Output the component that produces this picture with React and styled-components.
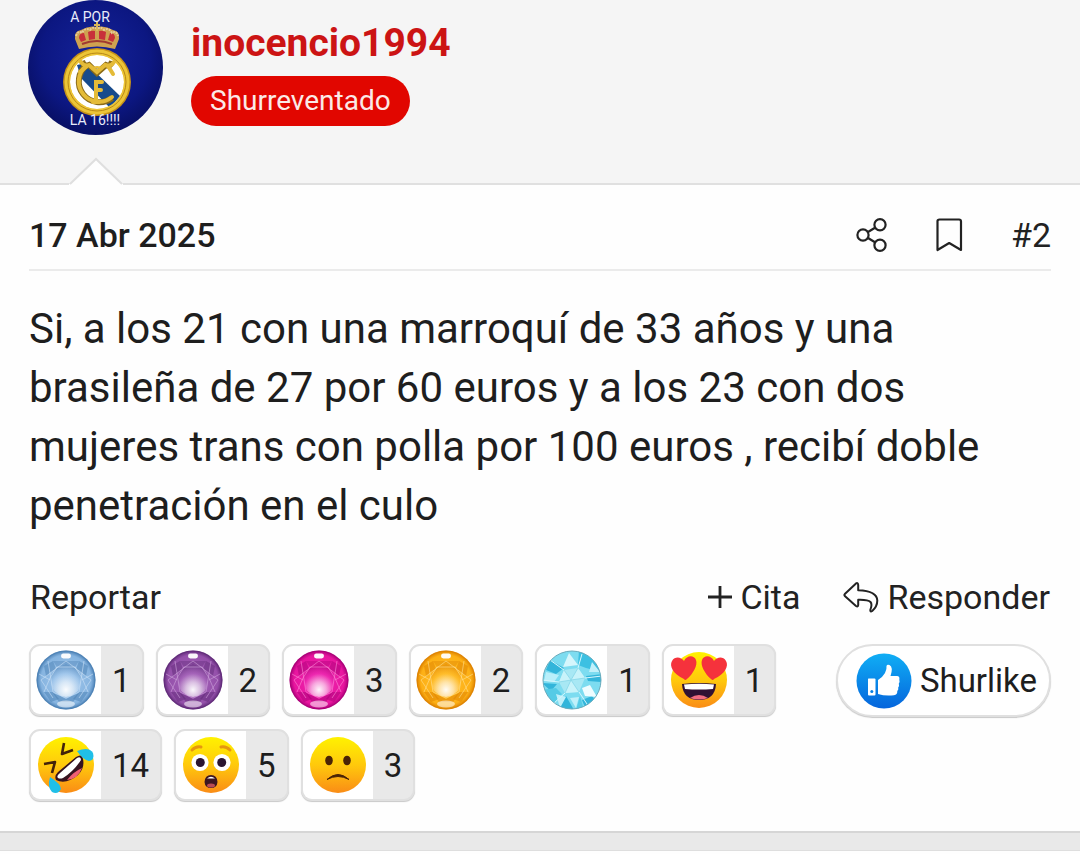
import React from 'react';
import styled, { createGlobalStyle } from 'styled-components';

const GEM_COLORS = {
  blue: { light: '#a4c9ed', mid: '#86b4e0', dark: '#4a7fb4', line: '#cde2f6' },
  purple: { light: '#a766bb', mid: '#9450aa', dark: '#5f2a78', line: '#cfa5dc' },
  pink: { light: '#ee2ab2', mid: '#e8159f', dark: '#a90077', line: '#fb8ad6' },
  amber: { light: '#ffbe2c', mid: '#fdb015', dark: '#dd8100', line: '#ffe095' },
};

const AvatarArt = () => (
  <svg viewBox="0 0 135 135" width="100%" height="100%" role="img" aria-label="Avatar de inocencio1994">
    <defs>
      <radialGradient id="avatarBg" cx="50%" cy="42%" r="58%">
        <stop offset="0" stopColor="#15239a" />
        <stop offset="0.7" stopColor="#0c1782" />
        <stop offset="1" stopColor="#080f63" />
      </radialGradient>
      <clipPath id="crestInner">
        <circle cx="69" cy="82" r="27" />
      </clipPath>
    </defs>
    <circle cx="67.5" cy="67.5" r="67.5" fill="url(#avatarBg)" />
    {/* crown */}
    <path d="M51 49 L47 39 Q46 31 53 30 Q61 25 69 27 Q77 25 85 30 Q92 31 91 39 L87 49 Q69 44 51 49Z" fill="#cfa250" />
    <path d="M51 38 Q51 33 56 33 L58 40 L53 42Z M87 38 Q87 33 82 33 L80 40 L85 42Z" fill="#c8303a" />
    <path d="M60 32 Q64 30 67 31 V39 L61 40Z M78 32 Q74 30 71 31 V39 L77 40Z" fill="#c8303a" />
    <path d="M54 44 Q69 38 84 44" stroke="#a03a30" strokeWidth="2" fill="none" />
    <path d="M48 36 Q50 30 54 33 Q57 27 62 30 Q65 26 69 29 Q73 26 76 30 Q81 27 84 33 Q88 30 90 36" stroke="#e6cb98" strokeWidth="2" strokeDasharray="2 1" fill="none" />
    <path d="M69 22 V31 M66 25 H72" stroke="#d9b75a" strokeWidth="2" />
    {/* round crest with the monogram */}
    <circle cx="69" cy="82" r="34" fill="#c69218" />
    <circle cx="69" cy="82" r="32.5" fill="#ecc537" />
    <circle cx="69" cy="82" r="29" fill="none" stroke="#b98a16" strokeWidth="1" />
    <g clipPath="url(#crestInner)">
      <circle cx="69" cy="82" r="27" fill="#fff" />
      <path d="M49 65 L58 63 L92 96 L82 108 L53 78Z" fill="#174b8c" />
    </g>
    <g fill="none" stroke="#8b6b18" strokeWidth="6">
      <path d="M84 98 A20 20 0 1 1 59 65" />
      <path d="M54 61 Q56 67 61 65 L69 73 L78 65 Q83 67 84 61" />
    </g>
    <g fill="none" stroke="#e4bb38" strokeWidth="4" strokeLinecap="round">
      <path d="M84 97 A20 20 0 1 1 58 66" />
      <path d="M52 61 Q56 67 61 65 L69 72 L77 65 Q83 67 86 62 M59 66 L52 72 M80 66 L85 74" />
      <path d="M68 101 V82 H74 M68 90 H73 M65 102 H71" />
    </g>
    <path d="M63 69 Q69 65 75 69" stroke="#e4bb38" strokeWidth="2" fill="none" />
    <AvatarText x="62" y="22">A POR</AvatarText>
    <AvatarText x="67" y="125">LA 16!!!!</AvatarText>
  </svg>
);

const ShareIcon = () => (
  <svg width="32" height="36" viewBox="0 0 32 36" fill="none" stroke="#222" strokeWidth="2.2" aria-hidden="true">
    <circle cx="8" cy="18" r="5.6" />
    <circle cx="25" cy="7.7" r="5.6" />
    <circle cx="25" cy="28.3" r="5.6" />
    <path d="M13 15 L20 10.8 M13 21 L20 25.2" />
  </svg>
);

const BookmarkIcon = () => (
  <svg width="28" height="36" viewBox="0 0 28 36" fill="none" stroke="#222" strokeWidth="2.2" strokeLinejoin="round" aria-hidden="true">
    <path d="M2.5 33 V4 Q2.5 2.5 4.5 2.5 H24 Q26 2.5 26 4.5 V33 L14.2 26Z" />
  </svg>
);

const PlusIcon = () => (
  <svg width="24" height="24" viewBox="0 0 24 24" stroke="#222" strokeWidth="2.8" aria-hidden="true">
    <path d="M12 1 V23 M0 12 H24" />
  </svg>
);

const ReplyIcon = () => (
  <svg width="36" height="32" viewBox="0 0 36 32" fill="none" stroke="#222" strokeWidth="2" strokeLinejoin="round" aria-hidden="true">
    <path d="M1.8 13 Q1 14 1.8 15 L13 25 Q15 26.2 15.2 24 V18.8 Q25 18.5 27.5 21 Q29.5 23.2 27.3 29 Q27.2 31.3 29.2 30 Q34.3 25.5 34.3 19.5 Q34 9.8 15.2 9.2 V4 Q15 1.2 13 2.4Z" />
  </svg>
);

const LikeIcon = () => (
  <svg width="56" height="56" viewBox="0 0 56 56" aria-hidden="true">
    <defs>
      <linearGradient id="likeBg" x1="0" y1="0" x2="0" y2="1">
        <stop offset="0" stopColor="#10aef5" />
        <stop offset="1" stopColor="#0565dc" />
      </linearGradient>
    </defs>
    <circle cx="28" cy="28" r="27.5" fill="url(#likeBg)" />
    <path d="M12.5 25.5 H18.5 Q19.5 25.5 19.5 26.5 V41.5 Q19.5 42.5 18.5 42.5 H13 Q12 42.5 12 41.5 V26.5Q12 25.5 12.5 25.5Z" fill="#fff" />
    <circle cx="15.8" cy="38.5" r="1.5" fill="#0880e4" />
    <path d="M22 27 Q26 25 29 20 Q31 16 30.5 13 Q31 11 33.5 12 Q37.5 14 34.5 23 H41 Q44 23.3 43.3 26.5 Q44 28.5 42.8 30.5 Q43.5 32.7 42.2 34.5 Q42.8 36.7 41.3 38 Q41.5 42 38 42.2 Q29 43.2 22 41Z" fill="#fff" />
  </svg>
);

const Gem = ({ tone }) => {
  const c = GEM_COLORS[tone];
  return (
    <svg width="60" height="60" viewBox="0 0 60 60" aria-hidden="true">
      <defs>
        <radialGradient id={`gem-${tone}`} cx="50%" cy="50%" r="50%">
          <stop offset="0" stopColor={c.light} />
          <stop offset="0.85" stopColor={c.mid} />
          <stop offset="1" stopColor={c.dark} />
        </radialGradient>
        <radialGradient id={`core-${tone}`} cx="50%" cy="78%" r="75%">
          <stop offset="0" stopColor="#fff" stopOpacity="0.95" />
          <stop offset="0.3" stopColor="#fff" stopOpacity="0.6" />
          <stop offset="0.65" stopColor={c.light} stopOpacity="0.6" />
          <stop offset="1" stopColor={c.dark} stopOpacity="0.6" />
        </radialGradient>
      </defs>
      <circle cx="30" cy="30" r="29.5" fill={`url(#gem-${tone})`} />
      <path d="M8 16 L17 11 L20 19 L10 26Z M52 16 L43 11 L40 19 L50 26Z M8 42 L17 42 L23 49 L15 52Z M52 42 L43 42 L37 49 L45 52Z" fill={c.dark} opacity="0.5" />
      <path d="M17 11 H43 L39 17 L30 14 L21 17Z" fill={c.dark} opacity="0.4" />
      <path d="M17 43 L24 46 L30 49 L36 46 L43 43 L37 52 H23Z" fill={c.dark} opacity="0.5" />
      <path d="M22 17 L30 14 L38 17 L45 25 L46 32 L42 41 L35 46 L30 47 L25 46 L18 41 L14 32 L15 25Z" fill={`url(#core-${tone})`} />
      <path d="M30 11 L5 30 L17 48 M30 11 L55 30 L43 48 M12 11 L17 42 L30 48 L43 42 L48 11 M8 42 L14 28 L21 17 H39 L46 28 L52 42 M3 24 L14 30 M57 24 L46 30" fill="none" stroke={c.line} strokeWidth="0.9" opacity="0.65" />
      <ellipse cx="30" cy="54" rx="9" ry="3.4" fill="#fff" opacity="0.55" />
      <rect x="25" y="3.5" width="10" height="5" rx="2.4" fill="#fff" opacity="0.95" />
      <circle cx="30" cy="30" r="28.9" fill="none" stroke={c.dark} strokeWidth="1.2" opacity="0.5" />
    </svg>
  );
};

const Diamond = () => (
  <svg width="60" height="60" viewBox="0 0 60 60" aria-hidden="true">
    <defs>
      <clipPath id="diamondClip">
        <circle cx="30" cy="30" r="29" />
      </clipPath>
    </defs>
    <g clipPath="url(#diamondClip)">
      <rect width="60" height="60" fill="#7ddcf0" />
      <path d="M37 0 L36 15 L44 18 L60 22 L52 4Z" fill="#3cc0e2" />
      <path d="M8 10 L22 18 L14 24 L4 20Z M0 33 L15 34 L9 41Z M24 46 L32 60 H14Z M44 26 L60 24 V32 L46 31Z M40 50 L50 46 L56 54 L44 60Z" fill="#33b5da" />
      <path d="M0 40 L14 38 L20 44 L11 54Z M38 46 L42 60 H34Z" fill="#55cbe6" />
      <path d="M27 3 L36 15 L21 17Z" fill="#d5f6fc" />
      <path d="M4 22 L17 25 L12 32 L2 31Z" fill="#b9effa" />
      <path d="M40 38 L48 35 L55 47 L43 46Z" fill="#eefcff" />
      <path d="M14 44 L24 47 L18 58Z M50 12 L58 22 L47 22Z M28 48 L37 47 L34 58Z" fill="#c0f0fa" />
      <path d="M22 20 L36 18 L43 28 L37 42 L23 43 L17 32Z" fill="#a8e8f4" />
      <path d="M22 20 L29 30 L17 32Z M36 18 L29 30 L43 28Z M37 42 L29 30 L23 43Z" fill="#c8f3fa" />
      <path d="M29 30 L22 20 M29 30 L36 18 M29 30 L43 28 M29 30 L37 42 M29 30 L23 43 M29 30 L17 32" stroke="#86d7e8" strokeWidth="0.8" />
      <path d="M22 20 L8 10 M36 18 L40 4 M43 28 L60 26 M37 42 L47 57 M23 43 L11 54 M17 32 L0 30" stroke="#d5f7fd" strokeWidth="1" />
    </g>
    <circle cx="30" cy="30" r="29" fill="none" stroke="#6aaabb" strokeWidth="1" />
  </svg>
);

const Face = ({ id, children }) => (
  <svg width="60" height="60" viewBox="0 0 60 60" aria-hidden="true">
    <defs>
      <linearGradient id={id} x1="0.5" y1="0" x2="0.5" y2="1">
        <stop offset="0" stopColor="#fff200" />
        <stop offset="0.5" stopColor="#ffc90c" />
        <stop offset="1" stopColor="#fa8c16" />
      </linearGradient>
    </defs>
    <circle cx="30" cy="30" r="28" fill={`url(#${id})`} />
    {children}
  </svg>
);

const LoveFace = () => (
  <Face id="loveFace">
    <path d="M15 29 C4 24 0 16 3 11 C6 6 12 7 15 11 C18 5 25 5 27 10 C29 15 24 24 18 29 Q16 31 15 29Z" fill="#f5323c" />
    <path d="M45 29 C56 24 60 16 57 11 C54 6 48 7 45 11 C42 5 35 5 33 10 C31 15 36 24 42 29 Q44 31 45 29Z" fill="#f5323c" />
    <path d="M13 34 Q30 32 47 34 Q46 50 30 50 Q14 50 13 34Z" fill="#301133" />
    <path d="M15 34.5 Q30 33 45 34.5 L44 39 Q30 40 16 39Z" fill="#fff" />
    <path d="M21 48 Q30 42 39 48 Q30 51 21 48Z" fill="#f16c80" />
  </Face>
);

const LaughFace = () => (
  <Face id="laughFace">
    <path d="M28 8 L26 19 L37 15 M8 29 L19 27 L16 38" fill="none" stroke="#43230a" strokeWidth="2.6" strokeLinejoin="round" />
    <path d="M20 45 Q18 41 22 37 L40 22 Q46 18 47 24 Q49 33 42 40 Q30 50 20 45Z" fill="#361320" />
    <path d="M22 43 Q20 41 24 38 L41 23 Q45 21 45 25 Q38 36 27 43 Q24 44 22 43Z" fill="#fff" />
    <path d="M31 45 Q37 37 46 33 Q42 44 31 45Z" fill="#ef6074" />
    <path d="M41 16 Q53 11 57 18 Q59 25 53 26 Q47 25 41 16Z" fill="#20bfe8" />
    <path d="M14 42 Q25 49 25 54 Q22 60 16 57 Q11 52 14 42Z" fill="#20bfe8" />
  </Face>
);

const ShockFace = () => (
  <Face id="shockFace">
    <path d="M11 15 Q15 11 20 12 M40 12 Q45 11 49 15" fill="none" stroke="#e5960f" strokeWidth="3" strokeLinecap="round" />
    <circle cx="19" cy="27.5" r="8.6" fill="#fff" />
    <circle cx="41" cy="27.5" r="8.6" fill="#fff" />
    <circle cx="19.3" cy="27.5" r="4.5" fill="#2a1530" />
    <circle cx="40.7" cy="27.5" r="4.5" fill="#2a1530" />
    <path d="M23.5 47 Q24 40 30 40 Q36 40 36.5 47 Q36 53 30 53 Q24 53 23.5 47Z" fill="#3c1622" />
    <path d="M26 43.5 Q30 40 34 43.5Z" fill="#fff" />
    <ellipse cx="30" cy="50.5" rx="4" ry="2" fill="#b84b55" />
  </Face>
);

const SadFace = () => (
  <Face id="sadFace">
    <ellipse cx="21" cy="25.5" rx="3.8" ry="4.8" fill="#4a2306" />
    <ellipse cx="39" cy="25.5" rx="3.8" ry="4.8" fill="#4a2306" />
    <path d="M19 44.5 Q30 34.5 41 44.5 Q30 38.5 19 44.5Z" fill="#4a2306" stroke="#4a2306" strokeWidth="1" strokeLinejoin="round" />
  </Face>
);

const reactions = [
  { name: 'Gema azul', icon: <Gem tone="blue" />, count: 1 },
  { name: 'Gema morada', icon: <Gem tone="purple" />, count: 2 },
  { name: 'Gema rosa', icon: <Gem tone="pink" />, count: 3 },
  { name: 'Gema dorada', icon: <Gem tone="amber" />, count: 2 },
  { name: 'Diamante', icon: <Diamond />, count: 1 },
  { name: 'Me encanta', icon: <LoveFace />, count: 1 },
  { name: 'Risa', icon: <LaughFace />, count: 14 },
  { name: 'Asombro', icon: <ShockFace />, count: 5 },
  { name: 'Triste', icon: <SadFace />, count: 3 },
];

const App = () => (
  <>
    <GlobalStyle />
    <Post>
      <UserHeader>
        <Avatar href="#perfil">
          <AvatarArt />
        </Avatar>
        <UserInfo>
          <UserName href="#perfil">inocencio1994</UserName>
          <UserBadge>Shurreventado</UserBadge>
        </UserInfo>
        <Notch viewBox="0 0 54 28" aria-hidden="true">
          <path d="M0 28 V27 L27 2 L54 27 V28Z" fill="#fefefe" />
          <path d="M1 27 L27 2 L53 27" fill="none" stroke="#dfdfdf" strokeWidth="2" />
        </Notch>
      </UserHeader>
      <PostBody>
        <MetaRow>
          <PostDate>17 Abr 2025</PostDate>
          <MetaActions>
            <IconButton type="button" aria-label="Compartir">
              <ShareIcon />
            </IconButton>
            <IconButton type="button" aria-label="Guardar">
              <BookmarkIcon />
            </IconButton>
            <TextLink href="#post-2">#2</TextLink>
          </MetaActions>
        </MetaRow>
        <Message>
          Si, a los 21 con una marroquí de 33 años y una brasileña de 27 por 60 euros y a los 23 con dos
          mujeres trans con polla por 100 euros , recibí doble penetración en el culo
        </Message>
        <ActionRow>
          <TextLink href="#reportar">Reportar</TextLink>
          <ActionGroup>
            <TextLink href="#citar">
              <PlusIcon />
              Cita
            </TextLink>
            <TextLink href="#responder">
              <ReplyIcon />
              Responder
            </TextLink>
          </ActionGroup>
        </ActionRow>
        <ReactionRow>
          <ReactionList>
            {reactions.map((item) => (
              <Reaction key={item.name} type="button" title={item.name}>
                <ReactionIcon>{item.icon}</ReactionIcon>
                <ReactionCount>{item.count}</ReactionCount>
              </Reaction>
            ))}
          </ReactionList>
          <LikeButton type="button">
            <LikeIcon />
            Shurlike
          </LikeButton>
        </ReactionRow>
      </PostBody>
      <Separator />
    </Post>
  </>
);

export default App;

const GlobalStyle = createGlobalStyle`
  * {
    box-sizing: border-box;
  }

  body {
    margin: 0;
    background: #fefefe;
    color: #1e1e1e;
    font-family: Roboto, 'Liberation Sans', sans-serif;
    overflow-x: hidden;
  }

  button {
    font-family: inherit;
    color: inherit;
    cursor: pointer;
  }

  svg {
    display: block;
    flex-shrink: 0;
  }
`;

const AvatarText = styled.text`
  font-family: Roboto, sans-serif;
  font-size: 14px;
  fill: #e8ebfa;
  text-anchor: middle;
`;

const Post = styled.article`
  width: 100%;
`;

const UserHeader = styled.header`
  position: relative;
  display: flex;
  gap: 28px;
  padding: 0 28px 48px;
  background: #f5f5f5;
  border-bottom: 2px solid #e0e0e0;
`;

const Avatar = styled.a`
  width: 135px;
  height: 135px;
  flex-shrink: 0;
`;

const UserInfo = styled.div`
  display: flex;
  flex-direction: column;
  align-items: flex-start;
  gap: 9px;
  padding-top: 19px;
`;

const UserName = styled.a`
  font-size: 39px;
  line-height: 48px;
  font-weight: 700;
  color: #cc1414;
  text-decoration: none;
`;

const UserBadge = styled.span`
  padding: 0 19px;
  border-radius: 25px;
  background: #e10600;
  color: #fbe9e7;
  font-size: 28px;
  line-height: 50px;
`;

const Notch = styled.svg`
  position: absolute;
  left: 69px;
  bottom: -2px;
  width: 54px;
  height: 28px;
`;

const PostBody = styled.div`
  padding: 16px 29px 30px;
`;

const MetaRow = styled.div`
  display: flex;
  align-items: center;
  justify-content: space-between;
  height: 70px;
  border-bottom: 2px solid #ebebeb;
`;

const PostDate = styled.time`
  font-size: 34px;
  line-height: 40px;
  font-weight: 500;
`;

const MetaActions = styled.div`
  display: flex;
  align-items: center;
  gap: 48px;
`;

const IconButton = styled.button`
  padding: 0;
  border: none;
  background: none;
`;

const TextLink = styled.a`
  display: flex;
  align-items: center;
  gap: 8px;
  font-size: 34px;
  line-height: 40px;
  color: #222;
  text-decoration: none;
`;

const Message = styled.p`
  margin: 28px 0 0;
  font-size: 42px;
  line-height: 59px;
`;

const ActionRow = styled.div`
  display: flex;
  align-items: center;
  justify-content: space-between;
  margin-top: 42px;
  padding: 0 1px;
`;

const ActionGroup = styled.div`
  display: flex;
  align-items: center;
  gap: 43px;
`;

const ReactionRow = styled.div`
  display: flex;
  align-items: flex-start;
  justify-content: space-between;
  gap: 24px;
  margin-top: 27px;
`;

const ReactionList = styled.div`
  display: flex;
  flex: 1;
  flex-wrap: wrap;
  gap: 13px 12px;
`;

const Reaction = styled.button`
  display: flex;
  height: 72px;
  padding: 0;
  border: 2px solid #e0e0e0;
  border-radius: 11px;
  background: #e9e9e9;
  box-shadow: 0 1px 1px #c8c8c8;
  overflow: hidden;
`;

const ReactionIcon = styled.span`
  display: flex;
  align-items: center;
  justify-content: center;
  width: 70px;
  height: 100%;
  background: #fff;
`;

const ReactionCount = styled.span`
  padding: 0 11px;
  font-size: 33px;
  line-height: 70px;
`;

const LikeButton = styled.button`
  display: flex;
  align-items: center;
  gap: 8px;
  height: 73px;
  padding: 0 12px 0 18px;
  border: 2px solid #e0e0e0;
  border-radius: 37px;
  background: #fff;
  box-shadow: 0 1px 1px #c8c8c8;
  font-size: 33px;
`;

const Separator = styled.div`
  height: 20px;
  border-top: 2px solid #d6d6d6;
  border-bottom: 1px solid #dedede;
  background: #e9e9e9;
`;
